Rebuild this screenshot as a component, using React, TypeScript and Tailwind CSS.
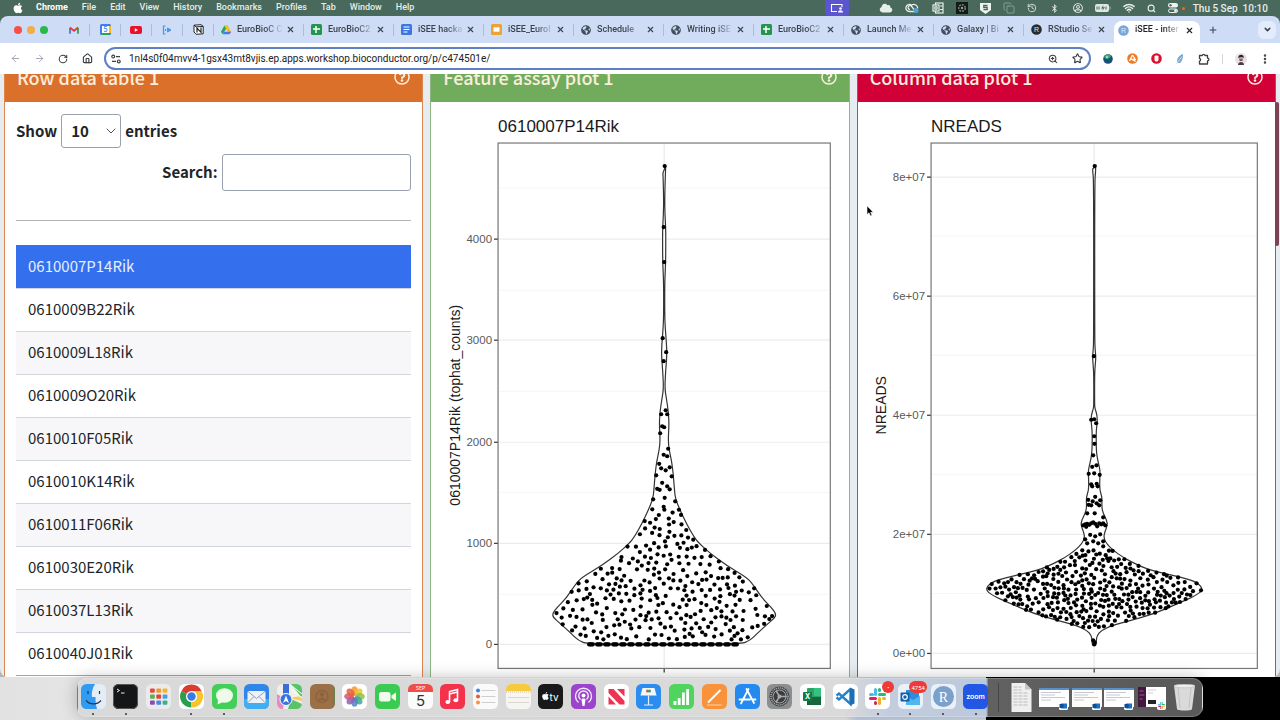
import type { ReactNode } from "react"
import {
  ArrowLeft,
  ArrowRight,
  ChevronDown,
  Copy,
  EllipsisVertical,
  History,
  House,
  Plus,
  RotateCw,
  Search,
  Star,
  Wifi,
  X,
  ZoomIn,
} from "lucide-react"
import { FaApple, FaBluetoothB, FaCloud, FaGlobeAmericas, FaRegQuestionCircle, FaRegUserCircle } from "react-icons/fa"

/* ---------- menu bar ---------- */

const menus = ["File", "Edit", "View", "History", "Bookmarks", "Profiles", "Tab", "Window", "Help"]

function MenuBar() {
  return (
    <header className="relative flex h-4 shrink-0 items-center bg-[#48695b] pl-3 pr-3 text-[9px] font-medium text-[#e6eeea]">
      <FaApple className="size-3 text-white" />
      <nav className="ml-3 flex items-center gap-[14px]">
        <span className="font-bold text-white">Chrome</span>
        {menus.map((m) => (
          <span key={m}>{m}</span>
        ))}
      </nav>
      <div className="ml-auto flex items-center gap-3">
        <div className="mr-[18px] flex h-4 w-6 items-center justify-center rounded-b-sm bg-[#5b55cf]">
          <svg viewBox="0 0 14 10" className="h-[10px] w-[14px]" fill="none" stroke="#fff">
            <path d="M7 8.500H1.500V1.500H12V4" strokeWidth="1.100" />
            <circle cx="10.500" cy="5.500" r="1.300" fill="#fff" stroke="none" />
            <path d="M8 9.500c0-3 5-3 5 0z" fill="#fff" stroke="none" />
          </svg>
        </div>
        <FaCloud className="h-[10px] w-[14px]" />
        <svg viewBox="0 0 15 12" className="h-3 w-[15px]" fill="none" stroke="#e6eeea" strokeWidth="1.300">
          <path d="M10 9.500H4.500a3.500 3.500 0 1 1 2-6.300c3-2 6.500.5 6 3.300" />
          <path d="M5 7.500a2 2 0 1 1 2-2.500l2 2.500" />
          <circle cx="11" cy="8.500" r="2.500" fill="#4da3d8" stroke="none" />
        </svg>
        <svg viewBox="0 0 12 12" className="size-3" fill="none" stroke="#e6eeea" strokeWidth="1.200">
          <rect x="3.500" y="1" width="7.500" height="10" />
          <rect x="1" y="3" width="6" height="6" fill="#48695b" />
          <circle cx="4" cy="6" r="1.300" />
          <path d="M8 4h3M8 7.500h3" />
        </svg>
        <svg viewBox="0 0 12 12" className="size-3">
          <rect width="12" height="12" fill="#141a17" />
          <circle cx="6" cy="6" r="3.300" fill="none" stroke="#7b8781" strokeWidth="1.500" strokeDasharray="2 1" />
          <circle cx="6" cy="6" r="1.200" fill="#9aa5a0" />
        </svg>
        <svg viewBox="0 0 11 11" className="size-[11px]">
          <path d="M0 0h11v7L5.500 11 0 7z" fill="#eef3f0" />
          <path d="M7.500 2.500H3.800v2h3.400v2.200H3.500" fill="none" stroke="#48695b" strokeWidth="1.300" />
        </svg>
        <Copy className="size-3 opacity-40" />
        <History className="size-[10px]" />
        <span className="flex w-3 justify-center">
          <FaBluetoothB className="size-[9px]" />
        </span>
        <FaRegUserCircle className="size-[10px]" />
        <svg viewBox="0 0 16 8" className="h-2 w-4">
          <rect width="14" height="8" rx="2" fill="#dfe7e3" />
          <path d="M15 2.500v3" stroke="#a9b8b0" />
          <path d="M2 2.500v3M4 2.500v3M11 2.500v3" stroke="#48695b" />
          <path d="M8.500 1L6 4.500h2L7 7l3-3.700H8z" fill="#48695b" />
        </svg>
        <Wifi className="size-3" strokeWidth={3} />
        <Search className="size-[9px]" strokeWidth={3} />
        <svg viewBox="0 0 10 10" className="size-[10px]">
          <rect width="10" height="4.400" rx="2.200" fill="#eef3f0" />
          <circle cx="2.500" cy="2.200" r="1.200" fill="#48695b" />
          <rect x=".5" y="6" width="9" height="3.500" rx="1.700" fill="none" stroke="#eef3f0" />
          <circle cx="7.500" cy="7.700" r="1.400" fill="#eef3f0" />
        </svg>
        <span className="-ml-2 size-[3px] rounded-full bg-orange-500" />
        <span className="-ml-1 whitespace-pre text-[10px]">Thu 5 Sep  10:10</span>
      </div>
    </header>
  )
}

/* ---------- browser chrome ---------- */

const DriveIcon = () => (
  <svg viewBox="0 0 12 12" className="size-[10px] shrink-0">
    <path d="M4 1h4L4 8 2 11 0 8z" fill="#22a565" />
    <path d="M4 1h4l4 7H8z" fill="#f9bc15" />
    <path d="M4 8h8l-2 3H2z" fill="#3f7fe8" />
    <path d="M9.500 8H12l-2 3z" fill="#e5443a" />
  </svg>
)
const SheetsIcon = () => (
  <svg viewBox="0 0 11 11" className="size-[11px] shrink-0">
    <rect width="11" height="11" rx="1.500" fill="#23954d" />
    <path d="M2 5h7M5 2v7" stroke="#fff" strokeWidth="1.500" />
  </svg>
)
const DocsIcon = () => (
  <svg viewBox="0 0 11 11" className="size-[11px] shrink-0">
    <rect width="11" height="11" rx="1.500" fill="#3f76dd" />
    <path d="M2.500 3h6M2.500 5.500h6M2.500 8h4" stroke="#fff" strokeWidth="1.200" />
  </svg>
)
const SlidesIcon = () => (
  <svg viewBox="0 0 11 11" className="size-[11px] shrink-0">
    <rect width="11" height="11" rx="1.500" fill="#eca336" />
    <rect x="2.500" y="3.300" width="6" height="4.400" fill="#fff" />
  </svg>
)
const GlobeIcon = () => <FaGlobeAmericas className="size-[10px] shrink-0 text-[#45505f]" />
const RIcon = ({ fill }: { fill: string }) => (
  <svg viewBox="0 0 11 11" className="size-[11px] shrink-0">
    <circle cx="5.500" cy="5.500" r="5.300" fill={fill} />
    <text x="5.500" y="8" fontSize="7" textAnchor="middle" fill="#dfeaf5" fontFamily="Liberation Sans, sans-serif">R</text>
  </svg>
)

const pinned = [
  {
    label: "Gmail",
    icon: (
      <svg viewBox="0 0 12 9" className="h-2 w-[10px]" fill="none" strokeWidth="2.200">
        <path d="M1.200 9V2" stroke="#3f7fe8" />
        <path d="M10.800 9V2" stroke="#2ba35a" />
        <path d="M1 1.500l5 4 5-4" stroke="#de3f35" />
      </svg>
    ),
  },
  {
    label: "Calendar",
    icon: (
      <svg viewBox="0 0 11 11" className="size-[11px]">
        <rect width="11" height="11" rx="1.500" fill="#3f7fe8" />
        <path d="M9 2h2v7H9z" fill="#f6bb25" />
        <path d="M2 9h7v2H2z" fill="#2ba35a" />
        <path d="M9 9h2l-2 2z" fill="#de3f35" />
        <rect x="2" y="2" width="7" height="7" fill="#fff" />
        <text x="5.500" y="8" fontSize="7" textAnchor="middle" fill="#3f7fe8" fontFamily="Inter, sans-serif">5</text>
      </svg>
    ),
  },
  {
    label: "YouTube",
    icon: (
      <svg viewBox="0 0 12 8" className="h-2 w-3">
        <rect width="12" height="8" rx="2" fill="#e8132b" />
        <path d="M4.800 2.200v3.600L8 4z" fill="#fff" />
      </svg>
    ),
  },
  {
    label: "Stream",
    icon: (
      <svg viewBox="0 0 10 10" className="size-[10px]" fill="none" stroke="#3f9be8">
        <path d="M3.500 1H1.500v8h2M3.500 4v2" strokeWidth="1.200" />
        <path d="M5.500 3L9 5 5.500 7z" fill="#3f9be8" />
      </svg>
    ),
  },
  {
    label: "Notion",
    icon: (
      <svg viewBox="0 0 11 11" className="size-[11px]" fill="#fff" stroke="#20242a">
        <path d="M1 1.200L8 .7l2.200 1.600v7.500l-7 .5L1 8z" />
        <path d="M4 8.500V4l4 4.300V3.500" fill="none" strokeWidth="1.200" />
        <path d="M1 1.200l2.200 1.700 7-.5" fill="none" />
      </svg>
    ),
  },
]

const tabs: { title: string; icon: ReactNode; active?: boolean }[] = [
  { title: "EuroBioC C", icon: <DriveIcon /> },
  { title: "EuroBioC2", icon: <SheetsIcon /> },
  { title: "iSEE hacka", icon: <DocsIcon /> },
  { title: "iSEE_Eurol", icon: <SlidesIcon /> },
  { title: "Schedule", icon: <GlobeIcon /> },
  { title: "Writing iSE", icon: <GlobeIcon /> },
  { title: "EuroBioC2", icon: <SheetsIcon /> },
  { title: "Launch Me", icon: <GlobeIcon /> },
  { title: "Galaxy | Bi", icon: <GlobeIcon /> },
  { title: "RStudio Se", icon: <RIcon fill="#262b33" /> },
  { title: "iSEE - inter", icon: <RIcon fill="#76a6db" />, active: true },
]

function TabStrip() {
  return (
    <div className="flex h-[27px] items-center bg-[#cedcf6] text-[9px] font-medium text-[#3c424c]">
      <div className="flex shrink-0 gap-[5px] pl-[14px] pr-[11px]">
        <button aria-label="Close" className="size-2 rounded-full bg-[#f6504d]" />
        <button aria-label="Minimize" className="size-2 rounded-full bg-[#f2ad45]" />
        <button aria-label="Zoom" className="size-2 rounded-full bg-[#28b946]" />
      </div>
      {pinned.map((p) => (
        <button
          key={p.label}
          aria-label={p.label}
          className="flex h-3 w-[31px] shrink-0 items-center justify-center border-r border-[#a9bce0]"
        >
          {p.icon}
        </button>
      ))}
      {tabs.map((t, i) => (
        <div
          key={i}
          className={
            t.active
              ? "flex h-[22px] w-[86px] items-center self-end rounded-t-lg bg-white pb-1 pl-1 pr-[6px] text-[#20242a]"
              : i === tabs.length - 2
                ? "flex h-3 w-[90px] items-center pl-[7px] pr-2"
                : "flex h-3 w-[90px] items-center border-r border-[#a9bce0] pl-[7px] pr-2"
          }
        >
          {t.icon}
          <button className="ml-[6px] flex-1 whitespace-nowrap text-left [mask-image:linear-gradient(to_right,#000_28px,transparent_46px)]">
            {t.title}
          </button>
          <button aria-label="Close tab" className="shrink-0">
            <X className="size-[9px]" strokeWidth={3} />
          </button>
        </div>
      ))}
      <button aria-label="New tab" className="ml-2">
        <Plus className="size-[10px]" strokeWidth={2.5} />
      </button>
      <button
        aria-label="Search tabs"
        className="ml-auto mr-1 flex size-[18px] items-center justify-center rounded-md bg-[#e3ecfb]"
      >
        <ChevronDown className="size-[9px]" strokeWidth={4} />
      </button>
    </div>
  )
}

function ToolButton({ label, children }: { label: string; children: ReactNode }) {
  return (
    <button aria-label={label} className="flex w-6 shrink-0 items-center justify-center text-[#3c4043]">
      {children}
    </button>
  )
}

function Toolbar() {
  return (
    <div className="flex h-[31px] items-center bg-white px-[3px]">
      <ToolButton label="Back">
        <ArrowLeft className="size-[11px] text-gray-400" />
      </ToolButton>
      <ToolButton label="Forward">
        <ArrowRight className="size-[11px] text-gray-400" />
      </ToolButton>
      <ToolButton label="Reload">
        <RotateCw className="size-[10px]" strokeWidth={2.5} />
      </ToolButton>
      <ToolButton label="Home">
        <House className="size-[11px]" strokeWidth={2.5} />
      </ToolButton>
      <div className="mx-[5px] flex h-[23px] flex-1 items-center rounded-full border-2 border-[#5f7fc4] bg-white pl-[5px]">
        <svg viewBox="0 0 10 10" className="size-[10px]" fill="none" stroke="#3c4043" strokeWidth="1.200">
          <circle cx="2.200" cy="2.600" r="1.400" />
          <path d="M5 2.600h4M1 7.400h4" />
          <circle cx="7.800" cy="7.400" r="1.400" />
        </svg>
        <input
          aria-label="Address"
          className="ml-2 min-w-0 flex-1 bg-transparent text-[10px] text-[#202124] outline-none"
          defaultValue="1nl4s0f04mvv4-1gsx43mt8vjis.ep.apps.workshop.bioconductor.org/p/c474501e/"
        />
        <ToolButton label="Zoom level">
          <ZoomIn className="size-[10px]" strokeWidth={2.5} />
        </ToolButton>
        <ToolButton label="Bookmark">
          <Star className="size-[11px]" strokeWidth={2.5} />
        </ToolButton>
      </div>
      <ToolButton label="Earth">
        <svg viewBox="0 0 10 10" className="size-[10px]">
          <circle cx="5" cy="5" r="4.800" fill="#17507a" />
          <path d="M1 3c2-3 6-3 7-1C7 4 6 5 3 5z" fill="#3cab6c" />
          <circle cx="4" cy="3" r="1.200" fill="#8ee0c0" />
        </svg>
      </ToolButton>
      <ToolButton label="Avast">
        <svg viewBox="0 0 11 11" className="size-[11px]">
          <circle cx="5.500" cy="5.500" r="5.300" fill="#f07a22" />
          <path d="M5.500 2L2.500 8M5.500 2l2.800 4.500H5l3.500 2" fill="none" stroke="#fff" strokeWidth="1.300" />
        </svg>
      </ToolButton>
      <ToolButton label="Content blocker">
        <svg viewBox="0 0 11 11" className="size-[11px]">
          <circle cx="5.500" cy="5.500" r="5.300" fill="#dc0f2d" />
          <path d="M3.500 3.500c0-1.500 4-1.500 4 0V7c-.5 2-3.500 2-4 0z" fill="#fff" />
        </svg>
      </ToolButton>
      <ToolButton label="Notes">
        <svg viewBox="0 0 10 11" className="size-[10px]">
          <path d="M8 0C3 2 1 6 2 10h3c2-2 4-6 3-10z" fill="#77a5cc" />
          <path d="M1 11L7 3" stroke="#dbe9f5" />
        </svg>
      </ToolButton>
      <ToolButton label="Extensions">
        <svg viewBox="0 0 12 12" className="size-3" fill="none" stroke="#3c4043" strokeWidth="1.300" strokeLinejoin="round">
          <path d="M1.500 2.500h2.800a1.400 1.400 0 0 1 2.700 0h2.500v2.700a1.400 1.400 0 0 1 0 2.800v3h-8V8.200a1.500 1.500 0 0 0 0-2.900z" />
        </svg>
      </ToolButton>
      <span className="mx-[6px] h-[10px] w-px bg-gray-300" />
      <ToolButton label="Profile">
        <svg viewBox="0 0 12 12" className="size-3">
          <circle cx="6" cy="6" r="6" fill="#e5e2e4" />
          <path d="M3 12c0-4 6-4 6 0z" fill="#4a3b45" />
          <circle cx="6" cy="5" r="2.400" fill="#c99c8d" />
          <path d="M3.300 5c-.5-4.500 6-4.500 5.500 0C8 3.500 5 3.500 3.300 5z" fill="#2a2228" />
          <path d="M4.500 6.500h3v1.200h-3z" fill="#3b2c30" />
        </svg>
      </ToolButton>
      <ToolButton label="Menu">
        <EllipsisVertical className="size-3" strokeWidth={3} />
      </ToolButton>
    </div>
  )
}

/* ---------- panels ---------- */

function PanelHeader({ title, className }: { title: string; className: string }) {
  return (
    <div className={`flex h-12 items-center justify-between px-3 pb-[2px] text-[#fbeedd] ${className}`}>
      <h3 className="text-[18px] font-medium">{title}</h3>
      <button aria-label={`Help for ${title}`}>
        <FaRegQuestionCircle className="size-4" />
      </button>
    </div>
  )
}

const genes = [
  "0610007P14Rik",
  "0610009B22Rik",
  "0610009L18Rik",
  "0610009O20Rik",
  "0610010F05Rik",
  "0610010K14Rik",
  "0610011F06Rik",
  "0610030E20Rik",
  "0610037L13Rik",
  "0610040J01Rik",
]

function RowDataPanel() {
  return (
    <section className="border-x border-[#dd8650] bg-white">
      <PanelHeader title="Row data table 1" className="bg-[#db702b]" />
      <div className="px-[11px] py-3 text-[15px] text-[#212529]">
        <div className="flex items-center gap-1 font-bold">
          <label htmlFor="length">Show</label>
          <span className="relative">
            <select
              id="length"
              defaultValue="10"
              className="h-[34px] w-[60px] appearance-none rounded-[3px] border border-gray-400 bg-white pl-[9px] font-bold"
            >
              <option>10</option>
              <option>25</option>
              <option>50</option>
            </select>
            <ChevronDown className="pointer-events-none absolute right-[2px] top-[9px] size-4 text-gray-600" strokeWidth={1.5} />
          </span>
          <label htmlFor="length">entries</label>
        </div>
        <div className="mt-[6px] flex items-center justify-end gap-1 font-bold">
          <label htmlFor="search">Search:</label>
          <input id="search" className="h-[37px] w-[48%] rounded-[3px] border border-gray-400 px-2 font-normal" />
        </div>
        <div className="h-[30px] border-b border-[#b5b5b5]" />
        <table className="mt-6 w-full border-b border-[#a5a5a5]">
          <tbody>
            {genes.map((g, i) => (
              <tr
                key={g}
                className={
                  i === 0 ? "bg-[#3470ed] text-[#e4efff]" : i % 2 ? "border-t border-gray-300" : "border-t border-gray-300 bg-[#f7f7f9]"
                }
              >
                <td className="h-[43px] px-3">{g}</td>
              </tr>
            ))}
          </tbody>
        </table>
      </div>
    </section>
  )
}

/* Half width of the violin at each height, top to bottom: [y, half width] */
type Profile = [number, number][]
type Point = [number, number]

const assayProfile: Profile = [
  [64, 1.5], [78, 1], [98, 0.5], [113, 0.8], [125, 1.5], [138, 1.6], [160, 1.5], [178, 0.6], [198, 0.5],
  [218, 0.6], [233, 1.6], [246, 2.6], [256, 2.5], [268, 1.5], [286, 0.6], [295, 2], [308, 4], [318, 4.7],
  [325, 4.7], [338, 4], [348, 5], [358, 7.3], [371, 9], [388, 10.3], [397, 11.3], [408, 16], [421, 22],
  [435, 30], [441, 35], [451, 46], [463, 62], [475, 82], [481, 88], [496, 98], [505, 107], [511, 111.5],
  [515, 111], [521, 104], [531, 93], [538, 86], [542, 76],
]
const readsProfile: Profile = [
  [64, 1.5], [70, 1.5], [78, 0.5], [238, 0.5], [248, 1], [255, 1.7], [263, 1], [273, 0.4], [302, 0.4],
  [306, 0.7], [313, 3], [321, 3], [328, 2], [341, 2], [351, 2.3], [360, 4], [368, 6], [378, 5.5], [388, 5.5],
  [395, 8], [405, 7.5], [411, 9], [418, 12.5], [423, 13.3], [430, 10.5], [435, 9.5], [441, 12], [448, 19],
  [455, 29], [461, 40], [468, 56], [475, 88], [480, 103], [487, 109], [493, 102], [501, 84], [511, 61],
  [518, 37], [523, 18], [528, 7], [533, 3], [538, 2], [543, 2],
]

/* Sparse points in the thin part: [offset from the axis, y] */
const assayTail: Point[] = [
  [0.5, 64], [-0.5, 125], [0, 160], [-1.5, 236], [2, 250], [-0.5, 259], [1.5, 308], [-3, 312], [3, 312],
  [-2, 324], [0, 325], [-4, 331], [4, 346.5], [-0.5, 352.5], [3, 354], [-5, 361.5], [-3, 366], [1.5, 368],
  [5.5, 365], [-8, 373], [7.5, 374], [-2, 380.5], [3, 384], [-7, 386.5], [-4.5, 387.5], [5.5, 387],
  [0.5, 395.5], [-11, 397], [11, 399], [-0.5, 404.5],
]
const readsTail: Point[] = [
  [0.5, 64], [-0.3, 254], [-3, 317.5], [0, 317], [2, 321], [0, 334], [0.3, 341.5], [-1, 353], [-2, 364.5],
  [2.3, 363], [-5.5, 371.5], [0, 371], [5.5, 372.5], [-3, 382], [2.5, 381.5], [-2, 384], [3.5, 384], [1, 394.5],
  [-6, 397.5], [-1.5, 399], [6, 398], [-5.5, 402.5], [-3, 403], [2.5, 401], [5, 403], [-7, 411], [0.5, 411],
  [9, 415], [-4, 432.5], [1, 434], [6, 432], [-9, 437], [-7, 441], [-1, 439], [4, 441], [9, 439], [9, 444],
  [-11, 423], [-9, 422], [-7, 421.5], [-5, 422.5], [-3, 421], [-1, 420], [1, 421.5], [3, 424], [5, 421],
  [7, 422], [9, 421], [11, 423], [-8, 424.5], [-1, 538], [0, 542], [0.5, 540],
]

/* Row of overlapping zero counts */
const zeros: Point[] = Array.from({ length: 76 }, (_, i) => [-75 + Math.floor(i / 4) * 8 + (i % 4) * 1.2, 542])

function halfWidth(profile: Profile, y: number) {
  for (let i = 1; i < profile.length; i++) {
    const [y1, w1] = profile[i]
    const [y0, w0] = profile[i - 1]
    if (y <= y1) return w0 + ((w1 - w0) * (y - y0)) / (y1 - y0)
  }
  return 0
}

/* Spreads points evenly inside the violin, between two heights */
function scatter(profile: Profile, count: number, top: number, bottom: number): Point[] {
  let seed = 11
  const rand = () => {
    seed = (seed * 16807) % 2147483647
    return seed / 2147483647
  }
  const points: Point[] = []
  while (points.length < count) {
    let best: Point = [0, top]
    let bestDistance = -1
    for (let k = 0; k < 9; ) {
      const y = top + rand() * (bottom - top)
      const x = (rand() * 2 - 1) * 112
      if (Math.abs(x) > halfWidth(profile, y) - 1) continue
      k++
      const d = Math.min(1e6, ...points.map(([px, py]) => (px - x) ** 2 + (py - y) ** 2))
      if (d > bestDistance) {
        bestDistance = d
        best = [x, y]
      }
    }
    points.push(best)
  }
  return points
}

function outline(profile: Profile, cx: number) {
  const pts = [
    ...profile.map(([y, w]) => [cx + w, y]),
    ...[...profile].reverse().map(([y, w]) => [cx - w, y]),
  ]
  let d = `M${pts[0][0]} ${pts[0][1]}`
  for (let i = 1; i < pts.length - 1; i++) {
    const [x, y] = pts[i]
    const [nx, ny] = pts[i + 1]
    d += ` Q${x} ${y} ${(x + nx) / 2} ${(y + ny) / 2}`
  }
  return d + "Z"
}

type PlotProps = {
  title: string
  label: string
  labelX: number
  labelY: number
  left: number
  right: number
  cx: number
  ticks: [string, number][]
  minor: number[]
  profile: Profile
  points: Point[]
}

function ViolinPlot({ title, label, labelX, labelY, left, right, cx, ticks, minor, profile, points }: PlotProps) {
  return (
    <svg viewBox="0 0 417 575" className="block w-full" fontFamily="Liberation Sans, Arial, sans-serif">
      <text x={left} y="30" fontSize="17" fill="#1a1a1a">{title}</text>
      <text transform={`translate(${labelX} ${labelY}) rotate(-90)`} textAnchor="middle" fontSize="14" fill="#1a1a1a">
        {label}
      </text>
      {minor.map((y) => (
        <path key={y} d={`M${left} ${y}H${right}`} stroke="#f5f5f5" />
      ))}
      <path d={`M${cx} 41V566`} stroke="#ededed" strokeWidth="1.500" />
      {ticks.map(([name, y]) => (
        <g key={name}>
          <path d={`M${left} ${y}H${right}`} stroke="#ececec" strokeWidth="1.200" />
          <path d={`M${left - 4} ${y}h4`} stroke="#333" strokeWidth="1.200" />
          <text x={left - 6} y={y + 4} fontSize="11.500" textAnchor="end" fill="#5a5a5a">{name}</text>
        </g>
      ))}
      <path d={`M${cx} 566v4`} stroke="#333" strokeWidth="1.200" />
      <rect x={left} y="41" width={right - left} height="525" fill="none" stroke="#777" strokeWidth="1.200" />
      <path d={outline(profile, cx)} fill="#fff" stroke="#333" strokeWidth="1.200" />
      {points.map(([x, y], i) => (
        <circle key={i} cx={cx + x} cy={y} r="2.100" />
      ))}
    </svg>
  )
}

const assayPoints = [...assayTail, ...zeros, ...scatter(assayProfile, 300, 407, 537)]
const readsPoints = [...readsTail, ...scatter(readsProfile, 340, 448, 525)]

/* ---------- dock ---------- */

function Tile({ fill, children }: { fill: string; children?: ReactNode }) {
  return (
    <svg viewBox="0 0 25 25" className="size-[25px]" fontFamily="Inter, sans-serif">
      <defs>
        <clipPath id="tile">
          <rect width="25" height="25" rx="5.500" />
        </clipPath>
      </defs>
      <rect width="25" height="25" rx="5.500" fill={fill} />
      <g clipPath="url(#tile)">{children}</g>
    </svg>
  )
}

const petals = ["#f39a2c", "#e9c62f", "#8fc04a", "#43a98b", "#4c84c9", "#8c62b3", "#d4567c", "#e8603c"]
const grid = ["#e8483f", "#f19a2b", "#f4b52c", "#52b64c", "#e0453c", "#49a0e0", "#8a4ab8", "#4b89dd", "#39b38b"]

const Window = ({ fill = "#fff" }: { fill?: string }) => (
  <svg viewBox="0 0 30 25" className="h-[25px] w-[30px]">
    <rect x="0" y="3" width="30" height="19" fill={fill} />
    <rect x="0" y="3" width="30" height="2" fill="#5b8fc7" />
    <path d="M2 7.500h20M2 10h14M2 12.500h24M2 15h10" stroke="#c3cad3" />
    <rect x="20" y="17" width="9" height="8" rx="1.500" fill="#fff" />
    <rect x="22" y="18.500" width="6" height="5" fill="#1b72c4" />
    <rect x="20.500" y="19" width="4" height="4" fill="#0d4f95" />
  </svg>
)

const SlackMark = () => (
  <g fill="none" strokeWidth="3" strokeLinecap="round">
    <path d="M10.500 5.500v5" stroke="#45bfe8" />
    <path d="M5.500 10.500h2" stroke="#45bfe8" />
    <path d="M19.500 10.500h-5" stroke="#2fb67d" />
    <path d="M14.500 5.500v1" stroke="#2fb67d" />
    <path d="M14.500 19.500v-5" stroke="#ecb22e" />
    <path d="M19.500 14.500h-1" stroke="#ecb22e" />
    <path d="M5.500 14.500h5" stroke="#de2460" />
    <path d="M10.500 19.500v-1" stroke="#de2460" />
  </g>
)

const dock: { name: string; running?: boolean; badge?: string; icon: ReactNode }[] = [
  {
    name: "Finder",
    running: true,
    icon: (
      <Tile fill="#e4edf6">
        <path d="M0 0h14c-3 5-3.500 9-3 13h3.500c0 5 .5 8 1.500 12H0z" fill="#2f9bf3" />
        <path d="M7 7v3M18.500 7v3M5 16.500c4 4.500 11 4.500 15 0" fill="none" stroke="#1c3450" strokeWidth="1.200" />
      </Tile>
    ),
  },
  {
    name: "Terminal",
    running: true,
    icon: (
      <Tile fill="#151617">
        <path d="M4 5l2.500 1.500L4 8M8 9h3.500" fill="none" stroke="#eee" />
        <rect x=".5" y=".5" width="24" height="24" rx="5" fill="none" stroke="#55585a" />
      </Tile>
    ),
  },
  {
    name: "Launchpad",
    icon: (
      <Tile fill="#eceaec">
        {grid.map((c, i) => (
          <rect key={i} x={4 + (i % 3) * 6.3} y={4.5 + Math.floor(i / 3) * 6} width="4.800" height="4.300" rx="1" fill={c} />
        ))}
      </Tile>
    ),
  },
  {
    name: "Chrome",
    running: true,
    icon: (
      <Tile fill="#fff">
        <path d="M12.500 12.500L2.500 7A11 11 0 0 1 22.500 7z" fill="#db3c30" />
        <path d="M12.500 12.500L2.500 7A11 11 0 0 0 12 23.500z" fill="#2a9e4c" />
        <path d="M12.500 12.500L12 23.500A11 11 0 0 0 22.500 7H12.500z" fill="#f7c52b" />
        <circle cx="12.500" cy="12.500" r="5.500" fill="#fff" />
        <circle cx="12.500" cy="12.500" r="4.200" fill="#3a7ae4" />
      </Tile>
    ),
  },
  {
    name: "Messages",
    running: true,
    icon: (
      <Tile fill="#42cf57">
        <ellipse cx="12.500" cy="11.500" rx="8.500" ry="7.300" fill="#eefbea" />
        <path d="M6 16l-.5 4.500L11 18z" fill="#eefbea" />
      </Tile>
    ),
  },
  {
    name: "Mail",
    icon: (
      <Tile fill="#2f86e8">
        <rect y="15" width="25" height="10" fill="#42aef2" />
        <rect x="3.500" y="7" width="18" height="12" rx="1.500" fill="#eef2f6" />
        <path d="M4 7.500l8.500 7 8.500-7M4 18.500l6-6M21 18.500l-6-6" fill="none" stroke="#8fa1b4" />
      </Tile>
    ),
  },
  {
    name: "Maps",
    icon: (
      <Tile fill="#f0efe9">
        <path d="M14 0h11v14z" fill="#56c468" />
        <path d="M0 10l8 5-2 10H0z" fill="#e68ac0" />
        <path d="M14 15l11 5v5H11z" fill="#5cc26a" />
        <path d="M12 14l13-2v5z" fill="#f3cf55" />
        <path d="M15 2l10 8M15 6l10 8" stroke="#fff" />
        <rect x="6" width="6" height="12" fill="#3c6fd6" />
        <circle cx="9" cy="15.500" r="6" fill="#3475e0" stroke="#fff" />
        <path d="M9 11.500l3 7.500-3-2-3 2z" fill="#fff" />
      </Tile>
    ),
  },
  {
    name: "Contacts",
    icon: (
      <Tile fill="#9c7047">
        <path d="M23 4h2v17h-2z" fill="#6f7f54" />
        <circle cx="12" cy="12.500" r="6" fill="none" stroke="#8c633c" strokeWidth="1.500" />
        <circle cx="12" cy="10.500" r="2.200" fill="#8c633c" />
        <path d="M8 16.500c1-4 7-4 8 0z" fill="#8c633c" />
      </Tile>
    ),
  },
  {
    name: "Photos",
    icon: (
      <Tile fill="#fff">
        {petals.map((c, i) => (
          <ellipse key={c} cx="12.500" cy="7" rx="3.400" ry="4.800" fill={c} opacity=".85" transform={`rotate(${i * 45} 12.500 12.500)`} />
        ))}
      </Tile>
    ),
  },
  {
    name: "FaceTime",
    icon: (
      <Tile fill="#3ccb52">
        <rect x="4" y="8" width="11.500" height="9.500" rx="2.500" fill="#f2fbf0" />
        <path d="M16.500 11.500l4.500-3v8.500l-4.500-3z" fill="#f2fbf0" />
      </Tile>
    ),
  },
  {
    name: "Calendar",
    icon: (
      <Tile fill="#fbfbfb">
        <rect width="25" height="8" fill="#ee4d4a" />
        <text x="12.500" y="6" fontSize="5" textAnchor="middle" fill="#fff">SEP</text>
        <text x="12.500" y="21.500" fontSize="15" textAnchor="middle" fill="#333">5</text>
      </Tile>
    ),
  },
  {
    name: "Music",
    icon: (
      <Tile fill="#f5324c">
        <path d="M9.500 18V7.500l8-2V16M9.500 10l8-2" fill="none" stroke="#fff" strokeWidth="1.600" />
        <ellipse cx="7.800" cy="18" rx="2.400" ry="2" fill="#fff" />
        <ellipse cx="15.800" cy="16.200" rx="2.400" ry="2" fill="#fff" />
      </Tile>
    ),
  },
  {
    name: "Reminders",
    icon: (
      <Tile fill="#fafafa">
        <path d="M8.500 6.500h14M8.500 12.500h14M8.500 18.500h14" stroke="#cfcfcf" />
        <circle cx="5" cy="6.500" r="2" fill="#3d80e8" />
        <circle cx="5" cy="12.500" r="2" fill="#e9573f" />
        <circle cx="5" cy="18.500" r="2" fill="#f09a3e" />
      </Tile>
    ),
  },
  {
    name: "Notes",
    icon: (
      <Tile fill="#f7f5f0">
        <rect width="25" height="7" fill="#f7c93c" />
        <path d="M0 8h25" stroke="#c9c2ae" strokeDasharray="1 1" />
        <path d="M2 13.500h21M2 18.500h21" stroke="#d9d7d2" />
      </Tile>
    ),
  },
  {
    name: "TV",
    icon: (
      <Tile fill="#17191a">
        <FaApple x="3" y="7.500" size={9} color="#fff" />
        <text x="11.500" y="16.500" fontSize="10" fill="#fff">tv</text>
      </Tile>
    ),
  },
  {
    name: "Podcasts",
    icon: (
      <Tile fill="#9a45cc">
        <g fill="none" stroke="#f4e6fb" strokeWidth="1.400">
          <path d="M7.500 18.500a8 8 0 1 1 10 0" />
          <path d="M9.500 15.500a4.800 4.800 0 1 1 6 0" />
        </g>
        <circle cx="12.500" cy="11.500" r="2" fill="#fff" />
        <path d="M10.500 15.500c0-1.500 4-1.500 4 0L13.500 22h-2z" fill="#fff" />
      </Tile>
    ),
  },
  {
    name: "News",
    icon: (
      <Tile fill="#fff">
        <path d="M4.500 5h5l11 12v3.500h-5L4.500 9z" fill="#ee3352" />
        <path d="M13 5h7.500v7.500zM4.500 12.500l7.500 8H4.500z" fill="#ee3352" />
      </Tile>
    ),
  },
  {
    name: "Keynote",
    icon: (
      <Tile fill="#2c8df0">
        <path d="M6.500 4h12l2 7.500h-16z" fill="#f2f7fc" />
        <path d="M12.500 11.500V21M8 21h9" stroke="#e3f0fb" strokeWidth="1.200" />
        <circle cx="11.500" cy="7" r="1.600" fill="#e9573f" />
        <circle cx="13.500" cy="7" r="1.600" fill="#3ba35c" />
      </Tile>
    ),
  },
  {
    name: "Numbers",
    icon: (
      <Tile fill="#4fd55e">
        <path d="M6 21v-4M10.200 21v-7M14.400 21V8.500M18.600 21V5" stroke="#fff" strokeWidth="2.800" />
      </Tile>
    ),
  },
  {
    name: "Pages",
    icon: (
      <Tile fill="#f9933b">
        <path d="M6 18.500L18.500 6" stroke="#fff" strokeWidth="2" />
        <path d="M5 21h15" stroke="#ffd0a0" />
      </Tile>
    ),
  },
  {
    name: "App Store",
    icon: (
      <Tile fill="#258af0">
        <path d="M13.500 5L7 17.500M11.500 5l7.500 14M4.500 15.500H15M17 15.500h3.500M6 19.500l.7-1.200" fill="none" stroke="#fff" strokeWidth="1.800" strokeLinecap="round" />
      </Tile>
    ),
  },
  {
    name: "System Settings",
    icon: (
      <Tile fill="#8c8e90">
        <circle cx="12.500" cy="12.500" r="10" fill="#3b3d3f" />
        <circle cx="12.500" cy="12.500" r="8.500" fill="none" stroke="#a9abad" strokeWidth="1.500" strokeDasharray="1.200 .8" />
        <circle cx="12.500" cy="12.500" r="6.500" fill="none" stroke="#a9abad" strokeWidth="1" />
        <path d="M12.500 12.500h7M12.500 12.500L9 6.500M12.500 12.500L9 18.500" stroke="#a9abad" strokeWidth="1.500" />
        <circle cx="12.500" cy="12.500" r="2" fill="#a9abad" />
      </Tile>
    ),
  },
  {
    name: "Excel",
    icon: (
      <Tile fill="#fff">
        <rect x="7" y="4" width="14" height="17" rx="1" fill="#2aa366" />
        <path d="M14 4h7v8h-7z" fill="#35c27e" />
        <path d="M7 13h14v8H7z" fill="#16663c" />
        <rect x="3" y="8" width="9" height="9" rx="1" fill="#0f7a42" />
        <text x="7.500" y="15" fontSize="7" fontWeight="700" textAnchor="middle" fill="#fff">X</text>
      </Tile>
    ),
  },
  {
    name: "Visual Studio Code",
    icon: (
      <Tile fill="#fff">
        <path d="M17.500 5v15L6 9.500 3.500 11.500M17.500 5L6 15.500 3.500 13.500" fill="none" stroke="#2583cb" strokeWidth="2.400" />
        <path d="M17 3.500l4.500 2v14l-4.500 2z" fill="#1c6fb5" />
      </Tile>
    ),
  },
  { name: "Slack", running: true, badge: "•", icon: <Tile fill="#fff"><SlackMark /></Tile> },
  {
    name: "Outlook",
    running: true,
    badge: "4754",
    icon: (
      <Tile fill="#eaf1f8">
        <path d="M8 6h13v13H8z" fill="#2b8ddc" />
        <path d="M8 12l7 4 7-4v9H8z" fill="#4fb6f0" />
        <rect x="2.500" y="8.500" width="9" height="9" rx="1" fill="#145ea8" />
        <circle cx="7" cy="13" r="2.300" fill="none" stroke="#fff" strokeWidth="1.200" />
      </Tile>
    ),
  },
  {
    name: "RStudio",
    running: true,
    icon: (
      <Tile fill="#e8f0f8">
        <circle cx="12.500" cy="12.500" r="10.500" fill="#7ba0cb" />
        <text x="12.500" y="17.500" fontSize="14" textAnchor="middle" fill="#fff" fontFamily="Liberation Serif, serif">R</text>
      </Tile>
    ),
  },
  {
    name: "Zoom",
    running: true,
    icon: (
      <Tile fill="#2257e6">
        <text x="12.500" y="14.500" fontSize="7" fontWeight="600" textAnchor="middle" fill="#fff">zoom</text>
      </Tile>
    ),
  },
]

const shelf: { name: string; icon: ReactNode }[] = [
  {
    name: "Document",
    icon: (
      <svg viewBox="0 0 25 29" className="h-[29px] w-[25px]">
        <path d="M2.500 0H16l6.500 6.500V29h-20z" fill="#efefef" />
        <path d="M16 0v6.500h6.500z" fill="#c4c4c4" />
        <path d="M4.500 4h8M4.500 7h8M4.500 10h15M4.500 13h15M4.500 16h15M4.500 19h15M4.500 22h15" stroke="#bdbdbd" strokeDasharray="4 1" />
      </svg>
    ),
  },
  { name: "Mail window 1", icon: <Window /> },
  { name: "Mail window 2", icon: <Window fill="#fdfcf8" /> },
  { name: "Mail window 3", icon: <Window /> },
  {
    name: "Slack window",
    icon: (
      <svg viewBox="0 0 30 25" className="h-[25px] w-[30px]">
        <rect x="1" y="2" width="28" height="20" fill="#fff" />
        <rect x="1" y="2" width="8" height="20" fill="#43183f" />
        <path d="M2.500 6h4M2.500 10h5M2.500 14h3" stroke="#8d5f88" />
        <rect x="11" y="15" width="8" height="4" fill="#23252a" />
        <path d="M11 5h8M11 8h5" stroke="#d9c9d3" />
        <rect x="20" y="16" width="9" height="9" rx="2" fill="#fff" />
        <g transform="translate(19.500 15.500) scale(.4)">
          <SlackMark />
        </g>
      </svg>
    ),
  },
  {
    name: "Trash",
    icon: (
      <svg viewBox="0 0 25 27" className="h-[27px] w-[25px]">
        <path d="M2 1.500h21L20 25c0 2-15 2-15 0z" fill="#d9dad9" />
        <path d="M6 4l2 20M19 4l-2 20" stroke="#c1c3c1" />
        <ellipse cx="12.500" cy="2" rx="10.500" ry="1.800" fill="#eceded" stroke="#bcbebc" strokeWidth=".7" />
      </svg>
    ),
  },
]

function Dock() {
  return (
    <footer className="relative flex h-[43px] shrink-0 justify-center bg-[linear-gradient(to_right,#e2e2e2_0,#f1f1f1_40%,#ececec_66%,#c6d5ea_67%,#d3deec_77%,#000_77%)]">
      <div className="mt-px flex h-[39px] w-[88%] justify-between rounded-[10px] border border-white/20 bg-[linear-gradient(to_right,#d9d9d9_0,#dadada_68%,#c3cddd_72%,#bcc9db_80.800%,#616161_81%,#595959)] pl-[3px] pr-[5px] shadow-[0_0_16px_rgba(0,0,0,0.25)]">
        {dock.map((d) => (
          <button key={d.name} aria-label={d.name} className="relative flex w-[25px] flex-col items-center pt-[5px]">
            {d.icon}
            {d.running && <span className="mt-1 size-[2px] rounded-full bg-[#333]" />}
            {d.badge && (
              <span className="absolute -right-1 top-[2px] flex h-3 min-w-3 items-center justify-center rounded-full bg-[#ee3a37] px-[2px] text-[6px] text-white">
                {d.badge}
              </span>
            )}
          </button>
        ))}
        <span className="mx-[2px] mt-1 h-[29px] w-px bg-[#454545]" />
        {shelf.map((s) => (
          <button key={s.name} aria-label={s.name} className="flex h-[36px] w-[25px] items-center justify-center">
            <span className="shrink-0">{s.icon}</span>
          </button>
        ))}
      </div>
    </footer>
  )
}

export default function App() {
  return (
    <div className="relative flex h-screen flex-col overflow-hidden bg-[linear-gradient(to_bottom,#48695b_50%,#b5b5b5_50%)] font-['Roboto',sans-serif]">
      <MenuBar />
      <div className="flex min-h-0 flex-1 flex-col overflow-hidden rounded-lg">
        <TabStrip />
        <Toolbar />
        <main className="relative min-h-0 flex-1 overflow-hidden bg-[#e6ecef] font-['Noto_Sans_CJK_SC','Noto_Sans',sans-serif]">
          <div className="-mt-5 grid grid-cols-3 gap-[7px] px-1">
            <RowDataPanel />
            <section className="border-x border-[#8fb682] bg-white">
              <PanelHeader title="Feature assay plot 1" className="bg-[#71ac5d]" />
              <ViolinPlot
                title="0610007P14Rik"
                label="0610007P14Rik (tophat_counts)"
                labelX={29}
                labelY={303}
                left={67}
                right={399}
                cx={233}
                ticks={[["4000", 137], ["3000", 238], ["2000", 340], ["1000", 441], ["0", 542]]}
                minor={[86, 188, 289, 390, 492]}
                profile={assayProfile}
                points={assayPoints}
              />
            </section>
            <section className="border-x border-[#c8416c] bg-white">
              <PanelHeader title="Column data plot 1" className="bg-[#d10036]" />
              <ViolinPlot
                title="NREADS"
                label="NREADS"
                labelX={28}
                labelY={303}
                left={73}
                right={399}
                cx={236}
                ticks={[["8e+07", 75], ["6e+07", 194], ["4e+07", 313], ["2e+07", 432], ["0e+00", 551]]}
                minor={[134, 253, 372, 491]}
                profile={readsProfile}
                points={readsPoints}
              />
            </section>
          </div>
          <div className="absolute right-px top-7 h-36 w-1 rounded-full bg-[#7d4355]" />
          <svg viewBox="0 0 8 12" className="absolute left-[866px] top-[131px] h-3 w-2">
            <path d="M1 .8v8.700l2-1.700 1.500 3.200 1.500-.7-1.400-3H7.300z" stroke="#fff" strokeWidth=".6" />
          </svg>
        </main>
      </div>
      <Dock />
    </div>
  )
}
